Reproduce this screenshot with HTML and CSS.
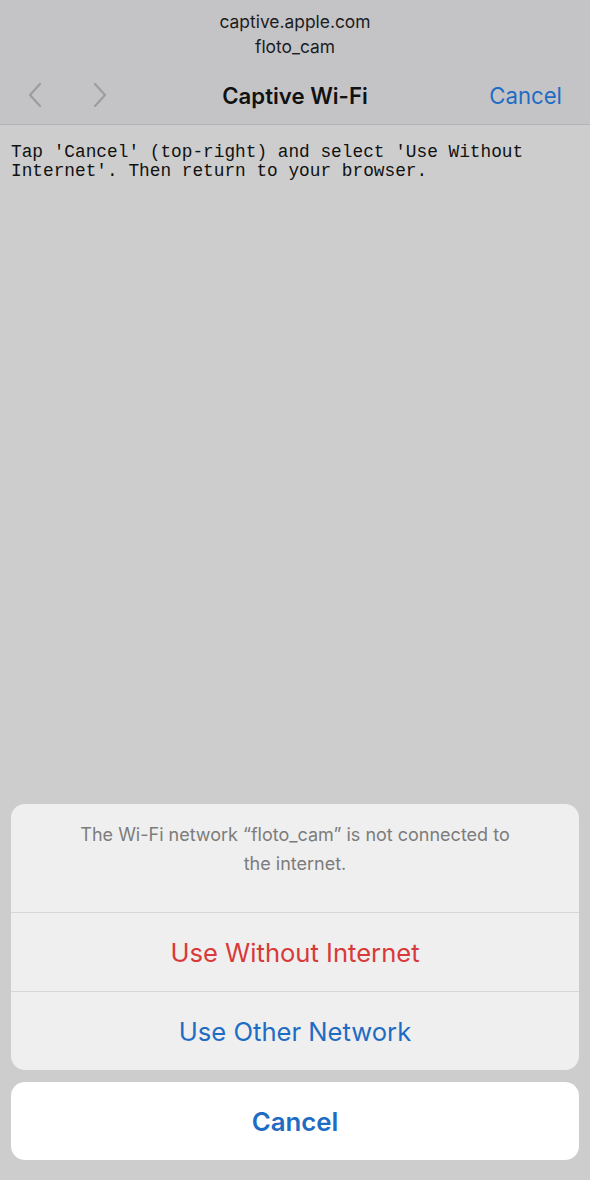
FILE: index.html
```html
<!DOCTYPE html>
<html>
<head>
<meta charset="utf-8">
<link rel="stylesheet" href="styles.css">
</head>
<body>
<div class="screen">
  <header class="header">
    <div class="host">captive.apple.com</div>
    <div class="ssid">floto_cam</div>
    <div class="nav">
      <div class="nav-left">
        <svg class="chev" width="16" height="26" viewBox="0 0 16 26"><polyline points="13,2 3,13 13,24" fill="none" stroke="#9d9da1" stroke-width="2.2" stroke-linecap="round" stroke-linejoin="round"/></svg>
        <svg class="chev" width="16" height="26" viewBox="0 0 16 26"><polyline points="3,2 13,13 3,24" fill="none" stroke="#9d9da1" stroke-width="2.2" stroke-linecap="round" stroke-linejoin="round"/></svg>
      </div>
      <div class="nav-title">Captive Wi-Fi</div>
      <div class="nav-right"><span class="nav-cancel">Cancel</span></div>
    </div>
  </header>
  <main class="content">
    <pre class="mono">Tap 'Cancel' (top-right) and select 'Use Without
Internet'. Then return to your browser.</pre>
  </main>
  <div class="sheet">
    <div class="sheet-group">
      <div class="sheet-msg">The Wi-Fi network “floto_cam” is not connected to the internet.</div>
      <div class="sheet-btn danger">Use Without Internet</div>
      <div class="sheet-btn">Use Other Network</div>
    </div>
    <div class="sheet-cancel">Cancel</div>
  </div>
</div>
</body>
</html>
```

FILE: styles.css
```css
* { box-sizing: border-box; }
html, body { margin: 0; padding: 0; }
body {
  width: 590px;
  height: 1180px;
  background: #cdcdcd;
  font-family: Inter, "Liberation Sans", sans-serif;
  overflow: hidden;
}
.screen {
  height: 1180px;
  display: flex;
  flex-direction: column;
}
.header {
  background: #c4c4c7;
  border-bottom: 1px solid #b3b3b6;
  padding-top: 9px;
  text-align: center;
  color: #1c1c1e;
}
.host, .ssid {
  font-size: 17.4px;
  line-height: 25px;
}
.nav {
  margin-top: 7px;
  height: 58px;
  display: grid;
  grid-template-columns: 1fr auto 1fr;
  align-items: center;
}
.nav-left {
  display: flex;
  align-items: center;
  gap: 49px;
  padding-left: 27px;
}
.nav-title {
  font-size: 22.2px;
  font-weight: 600;
  color: #111;
}
.nav-right {
  display: flex;
  justify-content: flex-end;
  padding-right: 28px;
}
.nav-cancel {
  font-size: 22.2px;
  color: #1f6cc4;
}
.content {
  flex: 1;
  padding: 18px 11px 0;
}
.mono {
  margin: 0;
  font-family: "Liberation Mono", monospace;
  font-size: 17.8px;
  line-height: 19px;
  color: #111;
}
.sheet {
  padding: 0 11px 20px;
  display: flex;
  flex-direction: column;
  gap: 12px;
}
.sheet-group {
  background: #efefef;
  border-radius: 14px;
  overflow: hidden;
}
.sheet-msg {
  padding: 16px 66px 34px;
  text-align: center;
  font-size: 18px;
  line-height: 29px;
  color: #7c7c7c;
}
.sheet-btn {
  border-top: 1px solid #d6d6d6;
  height: 79px;
  display: flex;
  align-items: center;
  justify-content: center;
  font-size: 25.6px;
  color: #1f6cc4;
}
.sheet-btn.danger { color: #d83a3a; }
.sheet-cancel {
  background: #fff;
  border-radius: 14px;
  height: 78px;
  display: flex;
  align-items: center;
  justify-content: center;
  font-size: 25.8px;
  font-weight: 600;
  color: #1f6cc4;
}
```
